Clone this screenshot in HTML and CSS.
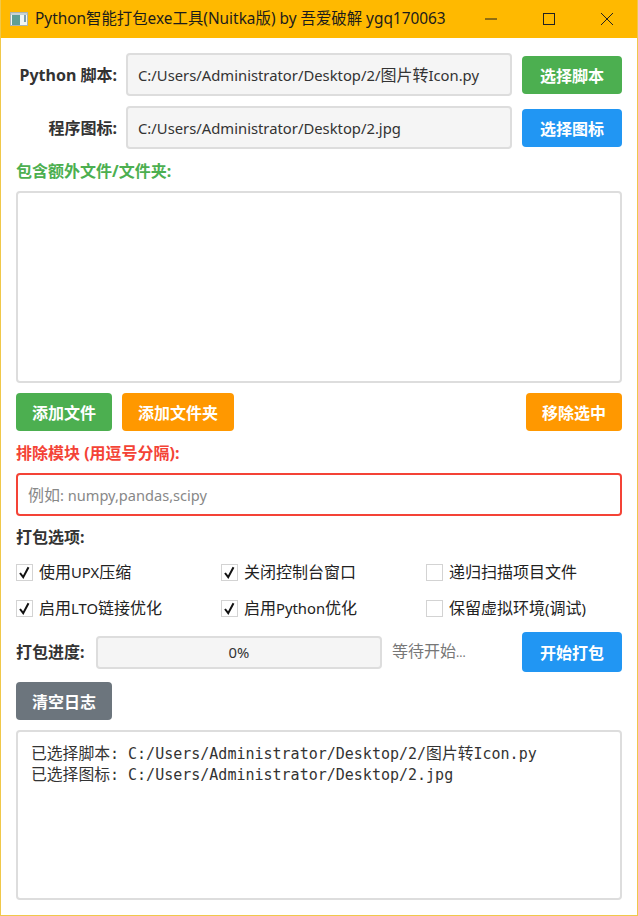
FILE: index.html
```html
<!DOCTYPE html>
<html lang="zh">
<head>
<meta charset="utf-8">
<title>Python智能打包exe工具</title>
<link rel="stylesheet" href="styles.css">
</head>
<body>
<div class="window">
  <header class="titlebar">
    <svg class="app-icon" width="18" height="16" viewBox="0 0 18 16">
      <rect x="0.5" y="1.5" width="17" height="13" fill="#f2f6f6" stroke="#a9b3b3"/>
      <rect x="1" y="2" width="16" height="2" fill="#c8d2d6"/>
      <rect x="2" y="4" width="8" height="10" fill="#5f9f96"/>
      <rect x="14" y="4" width="2" height="7" fill="#7d9fb0"/>
    </svg>
    <span class="title">Python智能打包exe工具(Nuitka版) by 吾爱破解 ygq170063</span>
    <div class="controls">
      <svg class="ctl" width="58" height="38" viewBox="0 0 58 38"><path d="M23 19h12" stroke="#222" fill="none"/></svg>
      <svg class="ctl" width="58" height="38" viewBox="0 0 58 38"><rect x="23.5" y="13.5" width="11" height="11" stroke="#222" fill="none"/></svg>
      <svg class="ctl" width="58" height="38" viewBox="0 0 58 38"><path d="M23 13l12 12M35 13l-12 12" stroke="#222" fill="none"/></svg>
    </div>
  </header>
  <main class="content">
    <div class="row">
      <label class="field-label">Python 脚本:</label>
      <div class="input filled"><span><span class="lat">C:/Users/Administrator/Desktop/2/</span>图片转<span class="lat">Icon.py</span></span></div>
      <button class="btn green wide">选择脚本</button>
    </div>
    <div class="row second">
      <label class="field-label">程序图标:</label>
      <div class="input filled"><span class="lat">C:/Users/Administrator/Desktop/2.jpg</span></div>
      <button class="btn blue wide">选择图标</button>
    </div>
    <div class="section-label green-text first-section">包含额外文件/文件夹:</div>
    <div class="listbox"></div>
    <div class="btn-row">
      <button class="btn green wide-96">添加文件</button>
      <button class="btn orange wide-112">添加文件夹</button>
      <button class="btn orange wide-96 push">移除选中</button>
    </div>
    <div class="section-label red-text exclude-label">排除模块 (用逗号分隔):</div>
    <div class="input exclude"><span>例如<span class="lat-small">: numpy,pandas,scipy</span></span></div>
    <div class="section-label options-label">打包选项:</div>
    <div class="options">
      <label class="check"><span class="box"><svg width="15" height="15" viewBox="0 0 15 15"><path d="M3 8l3.2 4.2 5.3-10" fill="none" stroke="#111" stroke-width="2"/></svg></span><span>使用<span class="lat">UPX</span>压缩</span></label>
      <label class="check"><span class="box"><svg width="15" height="15" viewBox="0 0 15 15"><path d="M3 8l3.2 4.2 5.3-10" fill="none" stroke="#111" stroke-width="2"/></svg></span>关闭控制台窗口</label>
      <label class="check"><span class="box"></span>递归扫描项目文件</label>
      <label class="check"><span class="box"><svg width="15" height="15" viewBox="0 0 15 15"><path d="M3 8l3.2 4.2 5.3-10" fill="none" stroke="#111" stroke-width="2"/></svg></span><span>启用<span class="lat">LTO</span>链接优化</span></label>
      <label class="check"><span class="box"><svg width="15" height="15" viewBox="0 0 15 15"><path d="M3 8l3.2 4.2 5.3-10" fill="none" stroke="#111" stroke-width="2"/></svg></span><span>启用<span class="lat">Python</span>优化</span></label>
      <label class="check"><span class="box"></span><span>保留虚拟环境<span class="lat">(</span>调试<span class="lat">)</span></span></label>
    </div>
    <div class="progress-row">
      <span class="progress-label">打包进度:</span>
      <div class="progress"><span class="lat">0%</span></div>
      <span class="status">等待开始<span class="dots">...</span></span>
      <button class="btn blue start">开始打包</button>
    </div>
    <button class="btn gray wide-96 clear">清空日志</button>
    <div class="log"><span class="cjk">已选择脚本</span>: C:/Users/Administrator/Desktop/2/<span class="cjk">图片转</span>Icon.py
<span class="cjk">已选择图标</span>: C:/Users/Administrator/Desktop/2.jpg</div>
  </main>
</div>
</body>
</html>
```
FILE: styles.css
```css
* { box-sizing: border-box; }
html, body { margin: 0; padding: 0; height: 100%; }
body { background: #fff; font-family: "Noto Sans", "Noto Sans CJK SC", sans-serif; font-size: 16px; line-height: 22px; color: #222; }
.lat { font-size: 14.8px; }
.lat-small { font-size: 14.6px; }
.dots { font-size: 12px; }
.window { width: 638px; height: 916px; border: 1px solid #f0c84a; border-top: 0; display: flex; flex-direction: column; overflow: hidden; }
.titlebar { height: 38px; margin: 0 -1px; background: #ffb900; display: flex; align-items: center; padding-left: 10px; flex: none; }
.app-icon { flex: none; margin-right: 7px; }
.title { font-size: 15.4px; color: #1c1c1c; white-space: nowrap; flex: 1; }
.controls { display: flex; margin-right: 2px; }
.ctl { display: block; }
.content { padding: 15px 15px 0; flex: 1; display: flex; flex-direction: column; }
.row { display: flex; align-items: center; height: 43px; }
.row.second { margin-top: 10px; }
.field-label { width: 101px; text-align: right; font-weight: 700; color: #333; white-space: nowrap; flex: none; }
.input { border: 2px solid #ddd; border-radius: 4px; height: 43px; display: flex; align-items: center; padding-left: 10px; white-space: nowrap; }
.input.filled { background: #f5f5f5; width: 386px; margin-left: 9px; color: #333; }
.btn { border: 0; border-radius: 4px; color: #fff; font: 700 16px "Noto Sans", "Noto Sans CJK SC", sans-serif; height: 38px; padding: 0; flex: none; }
.wide { width: 100px; margin-left: 10px; }
.wide-96 { width: 96px; }
.wide-112 { width: 112px; }
.green { background: #4caf50; }
.blue { background: #2196f3; }
.orange { background: #ff9800; }
.gray { background: #6c757d; }
.section-label { font-weight: 700; line-height: 20px; color: #333; }
.green-text { color: #4caf50; }
.red-text { color: #f44336; }
.first-section { margin-top: 12px; }
.listbox { height: 192px; margin-top: 10px; border: 2px solid #ddd; border-radius: 4px; background: #fff; flex: none; }
.btn-row { display: flex; gap: 10px; margin-top: 10px; }
.push { margin-left: auto; }
.exclude-label { margin-top: 12px; }
.input.exclude { margin-top: 10px; border-color: #f44336; color: #888; flex: none; }
.options-label { margin-top: 11px; }
.options { display: grid; grid-template-columns: repeat(3, 205px); grid-auto-rows: 36px; margin-top: 7px; }
.check { display: flex; align-items: center; gap: 6px; color: #222; white-space: nowrap; }
.box { width: 17px; height: 17px; border: 1px solid #d3d3d3; background: #fff; display: flex; align-items: center; justify-content: center; flex: none; }
.progress-row { display: flex; align-items: center; height: 40px; margin-top: 6px; }
.progress-label { font-weight: 700; color: #333; width: 80px; flex: none; }
.progress { width: 286px; height: 33px; border: 2px solid #ddd; border-radius: 4px; background: #f5f5f5; display: flex; align-items: center; justify-content: center; flex: none; color: #333; }
.status { margin-left: 10px; color: #777; flex: 1; white-space: nowrap; }
.start { width: 100px; height: 40px; }
.clear { margin-top: 10px; align-self: flex-start; }
.log { margin-top: 10px; height: 170px; border: 2px solid #ddd; border-radius: 4px; padding: 12px 13px; font: 15px/21px "DejaVu Sans Mono", "Noto Sans CJK SC", monospace; white-space: pre; color: #333; flex: none; }
.cjk { font-size: 15.8px; line-height: 1; }
```
